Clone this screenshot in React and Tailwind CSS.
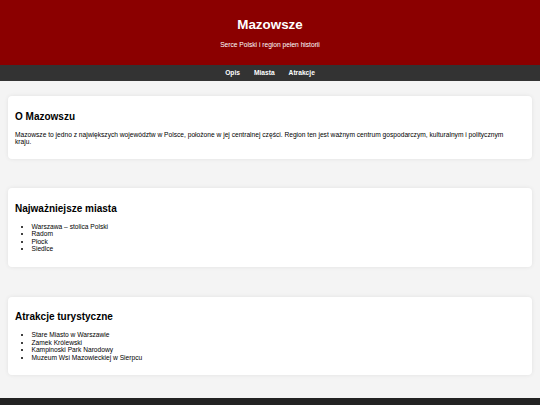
export default function App() {
  const font = { fontFamily: '"Liberation Sans", Arial, sans-serif' };
  return (
    <div className="min-h-[405px] bg-[#f4f4f4] text-black" style={font}>
      <header className="bg-[#8b0000] text-white text-center h-[65px] flex flex-col items-center pt-[17.3px]">
        <h1 className="text-[13.4px] leading-[15.4px] font-bold">Mazowsze</h1>
        <p className="text-[6.65px] leading-[7.6px] mt-[8.5px]">Serce Polski i region pełen historii</p>
      </header>
      <nav className="bg-[#333333] h-[16px] flex items-center justify-center gap-[14px] text-white text-[6.65px] font-bold leading-[7.6px]">
        <span>Opis</span>
        <span>Miasta</span>
        <span>Atrakcje</span>
      </nav>
      <main className="px-[8px] pt-[14.7px] pb-[22.7px] flex flex-col">
        <section className="bg-white rounded-[4px] shadow-[0_0_4px_rgba(0,0,0,0.08)] px-[7px] pt-[15.25px] pb-[13.45px]">
          <h2 className="text-[10px] leading-[11.5px] font-bold mb-[8.1px]">O Mazowszu</h2>
          <p className="text-[6.65px] leading-[7.5px] pr-[20px]">
            Mazowsze to jedno z największych województw w Polsce, położone w jej centralnej części. Region ten jest ważnym centrum gospodarczym, kulturalnym i politycznym kraju.
          </p>
        </section>
        <section className="mt-[29.3px] bg-white rounded-[4px] shadow-[0_0_4px_rgba(0,0,0,0.08)] px-[7px] pt-[14.25px] pb-[13.8px]">
          <h2 className="text-[10px] leading-[11.5px] font-bold mb-[8.85px]">Najważniejsze miasta</h2>
          <ul className="list-disc pl-[16.5px] text-[6.65px] leading-[7.5px]">
            <li>Warszawa – stolica Polski</li>
            <li>Radom</li>
            <li>Płock</li>
            <li>Siedlce</li>
          </ul>
        </section>
        <section className="mt-[30px] bg-white rounded-[4px] shadow-[0_0_4px_rgba(0,0,0,0.08)] px-[7px] pt-[14.25px] pb-[13.8px]">
          <h2 className="text-[10px] leading-[11.5px] font-bold mb-[8.85px]">Atrakcje turystyczne</h2>
          <ul className="list-disc pl-[16.5px] text-[6.65px] leading-[7.5px]">
            <li>Stare Miasto w Warszawie</li>
            <li>Zamek Królewski</li>
            <li>Kampinoski Park Narodowy</li>
            <li>Muzeum Wsi Mazowieckiej w Sierpcu</li>
          </ul>
        </section>
      </main>
      <footer className="bg-[#222222] h-[8px]"></footer>
    </div>
  );
}
